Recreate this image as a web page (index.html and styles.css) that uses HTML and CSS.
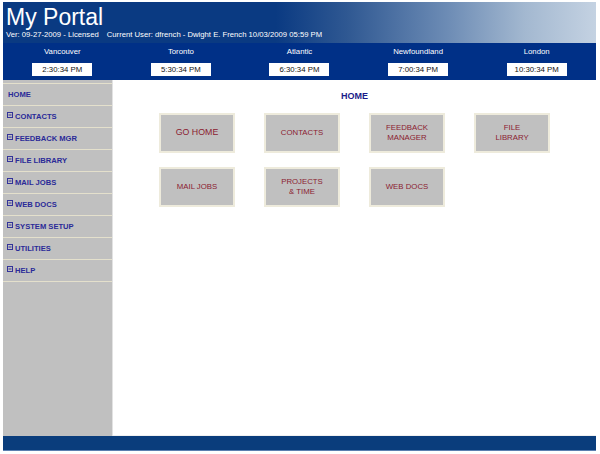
FILE: index.html
```html
<!DOCTYPE html>
<html>
<head>
<meta charset="utf-8">
<link rel="stylesheet" href="styles.css">
</head>
<body>
<div class="page">
  <header class="banner">
    <div class="title">My Portal</div>
    <div class="subtitle">Ver: 09-27-2009 - Licensed<span class="gap"></span>Current User: dfrench - Dwight E. French 10/03/2009 05:59 PM</div>
  </header>
  <div class="zones">
    <div class="zone"><div class="city">Vancouver</div><div class="clock">2:30:34 PM</div></div>
    <div class="zone"><div class="city">Toronto</div><div class="clock">5:30:34 PM</div></div>
    <div class="zone"><div class="city">Atlantic</div><div class="clock">6:30:34 PM</div></div>
    <div class="zone"><div class="city">Newfoundland</div><div class="clock">7:00:34 PM</div></div>
    <div class="zone"><div class="city">London</div><div class="clock">10:30:34 PM</div></div>
  </div>
  <div class="body">
    <nav class="sidebar">
      <div class="nav-item home">HOME</div>
      <div class="nav-item"><svg class="exp" width="6" height="6" viewBox="0 0 6 6"><rect x="0.5" y="0.5" width="5" height="5" fill="none" stroke="#33339a" stroke-width="1"/><line x1="1.5" y1="3" x2="4.5" y2="3" stroke="#33339a" stroke-width="1"/></svg>CONTACTS</div>
      <div class="nav-item"><svg class="exp" width="6" height="6" viewBox="0 0 6 6"><rect x="0.5" y="0.5" width="5" height="5" fill="none" stroke="#33339a" stroke-width="1"/><line x1="1.5" y1="3" x2="4.5" y2="3" stroke="#33339a" stroke-width="1"/></svg>FEEDBACK MGR</div>
      <div class="nav-item"><svg class="exp" width="6" height="6" viewBox="0 0 6 6"><rect x="0.5" y="0.5" width="5" height="5" fill="none" stroke="#33339a" stroke-width="1"/><line x1="1.5" y1="3" x2="4.5" y2="3" stroke="#33339a" stroke-width="1"/></svg>FILE LIBRARY</div>
      <div class="nav-item"><svg class="exp" width="6" height="6" viewBox="0 0 6 6"><rect x="0.5" y="0.5" width="5" height="5" fill="none" stroke="#33339a" stroke-width="1"/><line x1="1.5" y1="3" x2="4.5" y2="3" stroke="#33339a" stroke-width="1"/></svg>MAIL JOBS</div>
      <div class="nav-item"><svg class="exp" width="6" height="6" viewBox="0 0 6 6"><rect x="0.5" y="0.5" width="5" height="5" fill="none" stroke="#33339a" stroke-width="1"/><line x1="1.5" y1="3" x2="4.5" y2="3" stroke="#33339a" stroke-width="1"/></svg>WEB DOCS</div>
      <div class="nav-item"><svg class="exp" width="6" height="6" viewBox="0 0 6 6"><rect x="0.5" y="0.5" width="5" height="5" fill="none" stroke="#33339a" stroke-width="1"/><line x1="1.5" y1="3" x2="4.5" y2="3" stroke="#33339a" stroke-width="1"/></svg>SYSTEM SETUP</div>
      <div class="nav-item"><svg class="exp" width="6" height="6" viewBox="0 0 6 6"><rect x="0.5" y="0.5" width="5" height="5" fill="none" stroke="#33339a" stroke-width="1"/><line x1="1.5" y1="3" x2="4.5" y2="3" stroke="#33339a" stroke-width="1"/></svg>UTILITIES</div>
      <div class="nav-item last"><svg class="exp" width="6" height="6" viewBox="0 0 6 6"><rect x="0.5" y="0.5" width="5" height="5" fill="none" stroke="#33339a" stroke-width="1"/><line x1="1.5" y1="3" x2="4.5" y2="3" stroke="#33339a" stroke-width="1"/></svg>HELP</div>
    </nav>
    <main class="main">
      <h1 class="main-title">HOME</h1>
      <div class="tiles">
        <div class="cell"><div class="tile big">GO HOME</div></div>
        <div class="cell"><div class="tile">CONTACTS</div></div>
        <div class="cell"><div class="tile">FEEDBACK<br>MANAGER</div></div>
        <div class="cell"><div class="tile">FILE<br>LIBRARY</div></div>
        <div class="cell"><div class="tile">MAIL JOBS</div></div>
        <div class="cell"><div class="tile">PROJECTS<br>&amp; TIME</div></div>
        <div class="cell"><div class="tile">WEB DOCS</div></div>
      </div>
    </main>
  </div>
  <footer class="footer"></footer>
</div>
</body>
</html>
```

FILE: styles.css
```css
* { box-sizing: border-box; }
html, body { margin: 0; padding: 0; background: #ffffff; }
body { font-family: "Liberation Sans", Arial, sans-serif; }

.page {
  width: 593px;
  margin: 2px 0 0 3px;
}

.banner {
  height: 41px;
  padding: 4px 0 0 3px;
  color: #ffffff;
  background: linear-gradient(to right, #0a3a82 0%, #0a3a82 46%, #2f5892 58%, #6d8cb5 75%, #a3b8d0 88%, #c4d2e2 100%);
}
.title {
  font-size: 23px;
  line-height: 23px;
}
.subtitle {
  font-size: 7.7px;
  line-height: 10px;
  margin-top: 1px;
  white-space: nowrap;
}
.gap { display: inline-block; width: 8px; }

.zones {
  height: 37px;
  background: #003087;
  display: grid;
  grid-template-columns: repeat(5, 1fr);
  padding-top: 4px;
}
.zone {
  display: flex;
  flex-direction: column;
  align-items: center;
}
.city {
  color: #ffffff;
  font-size: 7.8px;
  line-height: 10px;
}
.clock {
  margin-top: 6px;
  width: 60px;
  height: 13px;
  background: #ffffff;
  color: #111111;
  font-size: 7.8px;
  line-height: 13px;
  text-align: center;
}

.body {
  display: flex;
  height: 356px;
}
.sidebar {
  width: 110px;
  background: #c0c0c0;
  border-right: 1px solid #e2e2e2;
  padding-top: 3px;
}
.nav-item {
  height: 22px;
  border-top: 1px solid #e4e0cc;
  display: flex;
  align-items: center;
  padding-left: 4px;
  font-size: 7.6px;
  font-weight: bold;
  color: #2a2a98;
}
.nav-item.home { padding-left: 5px; }
.nav-item.last { border-bottom: 1px solid #e4e0cc; height: 23px; }
.exp {
  margin-right: 2px;
  position: relative;
  top: -2px;
}

.main {
  flex: 1;
  background: #ffffff;
  padding-top: 10px;
  border-bottom: 1px solid #f0f0f0;
}
.main-title {
  margin: 0;
  text-align: center;
  font-size: 9px;
  line-height: 12px;
  font-weight: bold;
  color: #1c1c8a;
}
.tiles {
  margin: 11px auto 0;
  width: 420px;
  display: grid;
  grid-template-columns: repeat(4, 105px);
  row-gap: 14px;
}
.cell {
  display: flex;
  justify-content: center;
}
.tile {
  width: 76px;
  height: 40px;
  background: #c0c0c0;
  border: 2px solid #eeebdc;
  display: flex;
  align-items: center;
  justify-content: center;
  text-align: center;
  color: #8b2030;
  font-size: 7.8px;
  line-height: 9.6px;
}
.tile.big { font-size: 8.8px; }

.footer {
  height: 15px;
  background: #0a3d7c;
  border-bottom: 1px solid #5a7fb0;
}
```
